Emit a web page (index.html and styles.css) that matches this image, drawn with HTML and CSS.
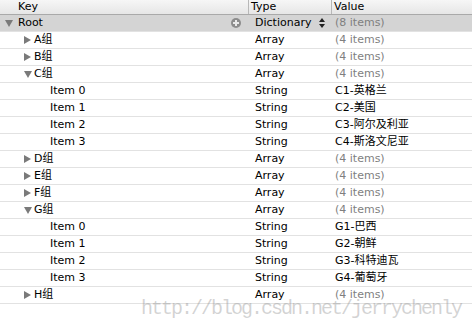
FILE: index.html
```html
<!DOCTYPE html>
<html lang="en">
<head>
    <meta charset="UTF-8">
    <title>Plist</title>
    <link rel="stylesheet" href="styles.css">
</head>
<body>
    <div class="plist">
        <div class="head">
            <div class="hcell key">Key</div>
            <div class="hcell type">Type</div>
            <div class="hcell value">Value</div>
        </div>

        <div class="row root">
            <div class="cell key lvl0"><span class="tri open"></span>Root<span class="add"></span></div>
            <div class="cell type">Dictionary<span class="stepper"><i class="up"></i><i class="down"></i></span></div>
            <div class="cell value muted">(8 items)</div>
        </div>
        <div class="row">
            <div class="cell key lvl1"><span class="tri"></span>A组</div>
            <div class="cell type">Array</div>
            <div class="cell value muted">(4 items)</div>
        </div>
        <div class="row">
            <div class="cell key lvl1"><span class="tri"></span>B组</div>
            <div class="cell type">Array</div>
            <div class="cell value muted">(4 items)</div>
        </div>
        <div class="row">
            <div class="cell key lvl1"><span class="tri open"></span>C组</div>
            <div class="cell type">Array</div>
            <div class="cell value muted">(4 items)</div>
        </div>
        <div class="row">
            <div class="cell key lvl2">Item 0</div>
            <div class="cell type">String</div>
            <div class="cell value">C1-英格兰</div>
        </div>
        <div class="row">
            <div class="cell key lvl2">Item 1</div>
            <div class="cell type">String</div>
            <div class="cell value">C2-美国</div>
        </div>
        <div class="row">
            <div class="cell key lvl2">Item 2</div>
            <div class="cell type">String</div>
            <div class="cell value">C3-阿尔及利亚</div>
        </div>
        <div class="row">
            <div class="cell key lvl2">Item 3</div>
            <div class="cell type">String</div>
            <div class="cell value">C4-斯洛文尼亚</div>
        </div>
        <div class="row">
            <div class="cell key lvl1"><span class="tri"></span>D组</div>
            <div class="cell type">Array</div>
            <div class="cell value muted">(4 items)</div>
        </div>
        <div class="row">
            <div class="cell key lvl1"><span class="tri"></span>E组</div>
            <div class="cell type">Array</div>
            <div class="cell value muted">(4 items)</div>
        </div>
        <div class="row">
            <div class="cell key lvl1"><span class="tri"></span>F组</div>
            <div class="cell type">Array</div>
            <div class="cell value muted">(4 items)</div>
        </div>
        <div class="row">
            <div class="cell key lvl1"><span class="tri open"></span>G组</div>
            <div class="cell type">Array</div>
            <div class="cell value muted">(4 items)</div>
        </div>
        <div class="row">
            <div class="cell key lvl2">Item 0</div>
            <div class="cell type">String</div>
            <div class="cell value">G1-巴西</div>
        </div>
        <div class="row">
            <div class="cell key lvl2">Item 1</div>
            <div class="cell type">String</div>
            <div class="cell value">G2-朝鲜</div>
        </div>
        <div class="row">
            <div class="cell key lvl2">Item 2</div>
            <div class="cell type">String</div>
            <div class="cell value">G3-科特迪瓦</div>
        </div>
        <div class="row">
            <div class="cell key lvl2">Item 3</div>
            <div class="cell type">String</div>
            <div class="cell value">G4-葡萄牙</div>
        </div>
        <div class="row">
            <div class="cell key lvl1"><span class="tri"></span>H组</div>
            <div class="cell type">Array</div>
            <div class="cell value muted">(4 items)</div>
        </div>

        <div class="watermark">http://blog.csdn.net/jerrychenly</div>
    </div>
</body>
</html>
```

FILE: styles.css
```css
:root {
    --line: #e2e2e2;
    --muted: #7f7f7f;
    --tri: #7a7a7a;
    --root-bg: #d4d4d4;
}

body {
    margin: 0;
    background: #ffffff;
    font-family: "DejaVu Sans", "Noto Sans CJK SC", sans-serif;
    font-size: 11px;
    color: #000;
}

.plist {
    position: relative;
    width: 472px;
    height: 329px;
    overflow: hidden;
}

.head,
.row {
    display: grid;
    grid-template-columns: 248px 83px 1fr;
}

.head {
    height: 14px;
    line-height: 14px;
    background: linear-gradient(#f6f6f6, #e6e6e6);
    border-bottom: 1px solid #a9a9a9;
}

.hcell {
    padding-left: 2px;
}

.hcell.key {
    padding-left: 18px;
}

.hcell.type,
.hcell.value {
    border-left: 1px solid #b8b8b8;
}

.row {
    height: 16px;
    line-height: 16px;
    border-bottom: 1px solid var(--line);
}

.row.root {
    background: var(--root-bg);
}

.cell {
    display: flex;
    align-items: center;
    white-space: nowrap;
}

.cell.type {
    padding-left: 7px;
    position: relative;
}

.cell.value {
    padding-left: 4px;
}

.muted {
    color: var(--muted);
}

.lvl0 { padding-left: 5px; }
.lvl1 { padding-left: 24px; }
.lvl2 { padding-left: 50px; }

.tri {
    width: 0;
    height: 0;
    margin-right: 3px;
    border-top: 4px solid transparent;
    border-bottom: 4px solid transparent;
    border-left: 7px solid var(--tri);
}

.tri.open {
    margin-right: 2px;
    border-left: 4px solid transparent;
    border-right: 4px solid transparent;
    border-top: 7px solid var(--tri);
    border-bottom: 0;
    margin-top: 1px;
}

.lvl0 .tri.open {
    margin-right: 5px;
}

.add {
    position: relative;
    width: 10px;
    height: 10px;
    margin-left: auto;
    margin-right: 7px;
    border-radius: 50%;
    background: #8c8c8c;
}

.add::before,
.add::after {
    content: "";
    position: absolute;
    background: #e8e8e8;
}

.add::before {
    left: 2px;
    top: 4px;
    width: 6px;
    height: 2px;
}

.add::after {
    left: 4px;
    top: 2px;
    width: 2px;
    height: 6px;
}

.stepper {
    display: flex;
    flex-direction: column;
    gap: 2px;
    margin-left: auto;
    margin-right: 6px;
}

.stepper i {
    width: 0;
    height: 0;
    border-left: 3px solid transparent;
    border-right: 3px solid transparent;
}

.stepper .up {
    border-bottom: 4px solid #222;
}

.stepper .down {
    border-top: 4px solid #222;
}

.watermark {
    position: absolute;
    left: 141px;
    top: 297px;
    font-family: "Liberation Mono", monospace;
    font-size: 20px;
    letter-spacing: -2px;
    color: rgba(140, 140, 140, 0.38);
    pointer-events: none;
}
```
